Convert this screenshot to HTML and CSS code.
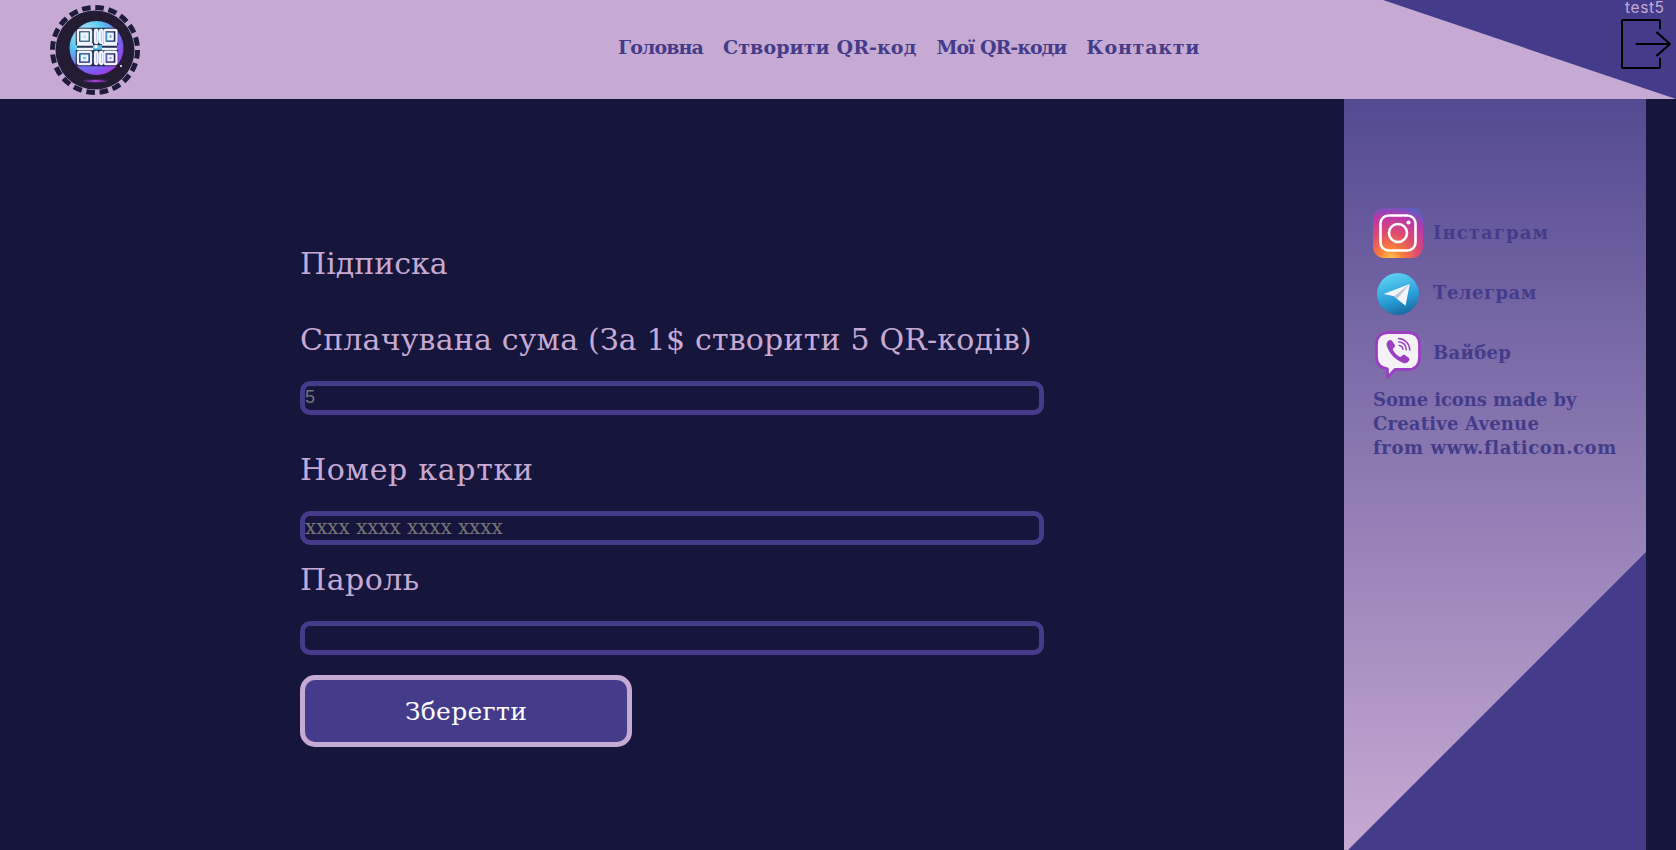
FILE: index.html
```html
<!DOCTYPE html>
<html lang="uk">
<head>
<meta charset="utf-8">
<title>Підписка</title>
<link rel="stylesheet" href="styles.css">
</head>
<body>
<header class="header">
  <a class="logo" href="#">
    <svg viewBox="0 0 90 90" width="90" height="90">
      <defs>
        <radialGradient id="lg" cx="0.3" cy="0.25" r="0.95">
          <stop offset="0" stop-color="#c8ecf8"/>
          <stop offset="0.35" stop-color="#54c8f0"/>
          <stop offset="0.7" stop-color="#7a5cf0"/>
          <stop offset="1" stop-color="#c020e0"/>
        </radialGradient>
        <linearGradient id="lb" x1="0" x2="1">
          <stop offset="0" stop-color="#2a2040"/>
          <stop offset="0.5" stop-color="#b040e8"/>
          <stop offset="1" stop-color="#2a2040"/>
        </linearGradient>
      </defs>
      <circle cx="45" cy="45" r="42.500" fill="none" stroke="#1f1b3a" stroke-width="5" stroke-dasharray="8.600 4.750"/>
      <circle cx="45" cy="45" r="39.500" fill="#231c33"/>
      <circle cx="46.500" cy="43" r="27" fill="url(#lg)"/>
      <g fill="none" stroke="#17122c" stroke-width="4.500" opacity="0.800">
        <path d="M28 25h13v13h-13zM45 25h7v13h-7zM54 25h12v13h-12zM28 47h13v12h-13zM45 47h7v12h-7zM54 47h12v12h-12zM27 41h16M52 41h15"/>
      </g>
      <g fill="none" stroke="#eef3fd" stroke-width="2.300">
        <rect x="28" y="25" width="13" height="13" rx="1"/>
        <rect x="32" y="29" width="5" height="5"/>
        <rect x="45" y="25" width="2.500" height="13" rx="1"/>
        <rect x="50" y="25" width="2.500" height="13" rx="1"/>
        <rect x="54.500" y="25" width="12" height="13" rx="1"/>
        <rect x="58.500" y="29" width="4" height="5"/>
        <rect x="28" y="47" width="13" height="12" rx="1"/>
        <rect x="32" y="51" width="5" height="4"/>
        <rect x="45" y="47" width="2.500" height="12" rx="1"/>
        <rect x="50" y="47" width="2.500" height="12" rx="1"/>
        <rect x="54.500" y="47" width="12" height="12" rx="1"/>
        <rect x="58.500" y="51" width="4" height="4"/>
        <path d="M27 39.500h16M52 39.500h15M27 44h16M52 44h15"/>
      </g>
      <rect x="44.500" y="40" width="3" height="3" fill="#eef3fd"/>
      <circle cx="71" cy="61" r="1" fill="#fff"/>
      <rect x="33" y="74.800" width="25" height="2.400" rx="1.200" fill="url(#lb)"/>
    </svg>
  </a>
  <nav class="nav">
    <a class="nav-link nav-home" href="#">Головна</a>
    <a class="nav-link nav-create" href="#">Створити QR-код</a>
    <a class="nav-link nav-mine" href="#">Мої QR-коди</a>
    <a class="nav-link nav-contacts" href="#">Контакти</a>
  </nav>
  <div class="user">
    <span class="user-name">test5</span>
    <svg class="logout" viewBox="0 0 50 50" width="50" height="50" fill="none" stroke="#000" stroke-width="2" stroke-linecap="round" stroke-linejoin="round">
      <path d="M39 9.500V2a1 1 0 0 0-1-1H2a1 1 0 0 0-1 1v46a1 1 0 0 0 1 1h36a1 1 0 0 0 1-1v-8.500"/>
      <path d="M15.500 25H49M36 13.500 49 25 36 36.500"/>
    </svg>
  </div>
</header>
<div class="page">
  <main class="content">
    <h1 class="title">Підписка</h1>
    <form class="form">
      <label class="label label-first" for="sum">Сплачувана сума (За 1$ створити 5 QR-кодів)</label>
      <input class="field field-num" id="sum" type="text" placeholder="5">
      <label class="label label-wide" for="card">Номер картки</label>
      <input class="field field-card" id="card" type="text" placeholder="xxxx xxxx xxxx xxxx">
      <label class="label label-tight" for="pass">Пароль</label>
      <input class="field" id="pass" type="password">
      <button class="save" type="button">Зберегти</button>
    </form>
  </main>
  <aside class="side">
    <ul class="social">
      <li class="social-row">
        <span class="social-icon icon-insta">
          <svg viewBox="0 0 50 50" width="50" height="50">
            <defs>
              <radialGradient id="ig" cx="0.35" cy="1.050" r="1.150">
                <stop offset="0" stop-color="#ffd34e"/>
                <stop offset="0.22" stop-color="#fb7d3a"/>
                <stop offset="0.5" stop-color="#dc4a72"/>
                <stop offset="0.78" stop-color="#bb36ab"/>
                <stop offset="1" stop-color="#4f62c8"/>
              </radialGradient>
            </defs>
            <rect width="50" height="50" rx="11" fill="url(#ig)"/>
            <rect x="7.500" y="7.500" width="35" height="35" rx="8" fill="none" stroke="#fff" stroke-width="2.600"/>
            <circle cx="25" cy="25" r="9" fill="none" stroke="#fff" stroke-width="2.600"/>
            <circle cx="35.500" cy="14.500" r="2.100" fill="#fff"/>
          </svg>
        </span>
        <a class="social-link link-insta" href="#">Інстаграм</a>
      </li>
      <li class="social-row">
        <span class="social-icon icon-tg">
          <svg viewBox="0 0 50 50" width="42" height="42">
            <defs>
              <linearGradient id="tg" x1="0.3" y1="0" x2="0.6" y2="1">
                <stop offset="0" stop-color="#5fd4f6"/>
                <stop offset="0.6" stop-color="#2a9fd8"/>
                <stop offset="1" stop-color="#17699f"/>
              </linearGradient>
            </defs>
            <circle cx="25" cy="25" r="25" fill="url(#tg)"/>
            <path d="M8 25 L39 13 L34 39 L24 31 L22 28z" fill="#f4f5f8"/>
            <path d="M20 28 L39 13 L24 31 L34 39 Z" fill="#bcc8d6"/>
          </svg>
        </span>
        <a class="social-link link-tg" href="#">Телеграм</a>
      </li>
      <li class="social-row">
        <span class="social-icon icon-viber">
          <svg viewBox="0 0 46 48" width="46" height="48">
            <path d="M13 1.500h20c7 0 11.500 4.500 11.500 11.500v14c0 7-4.500 11.500-11.500 11.500H20l-7.500 8v-8.500C5.500 37 1.500 33 1.500 26V13C1.500 6 6 1.500 13 1.500z" fill="#f4f2f6" stroke="#9a3fc0" stroke-width="2.800" stroke-linejoin="round"/>
            <path d="M13 10c2-1.500 3.500-1 4.500.5l2 3c.8 1.300.5 2.500-.8 3.500-1 .8-1 1.500-.4 2.600 1.500 2.800 3.500 4.800 6 6 1 .5 1.700.3 2.400-.6 1-1.300 2.300-1.500 3.500-.7l3.200 2.300c1.300 1 1.400 2.300.4 3.500-1.500 2-3.500 2.700-5.700 1.800-8-3.400-13.500-9-16.300-17-.7-2 .2-3.500 1.200-4.900z" fill="#9a3fc0"/>
            <path d="M23.500 7.500c6.500.3 11 5 11.300 11.500M23.800 11c4.500.3 7.300 3.300 7.500 7.700M24.200 14.500c2.300.2 3.500 1.500 3.700 3.800" fill="none" stroke="#9a3fc0" stroke-width="1.500" stroke-linecap="round"/>
          </svg>
        </span>
        <a class="social-link link-viber" href="#">Вайбер</a>
      </li>
    </ul>
    <p class="credit">
      <span class="credit-line credit-some">Some icons made by</span>
      <span class="credit-line">Creative Avenue</span>
      <span class="credit-line credit-from">from www.flaticon.com</span>
    </p>
  </aside>
</div>
</body>
</html>
```
FILE: styles.css
```css
* { box-sizing: border-box; }
html, body { height: 100%; }
body {
  margin: 0;
  background: #16153c;
  font-family: "DejaVu Serif", "Liberation Serif", serif;
  overflow: hidden;
}
.header {
  position: relative;
  display: flex;
  align-items: center;
  height: 99px;
  background: #c7aad3;
  padding-left: 50px;
}
.header::before {
  content: "";
  position: absolute;
  inset: 0;
  background: #443c8a;
  clip-path: polygon(1383px 0, 1676px 0, 1676px 99px);
}
.logo {
  position: relative;
  display: block;
  width: 90px;
  height: 90px;
}
.logo svg { display: block; }
.nav {
  position: relative;
  display: flex;
  gap: 20px;
  margin-left: 478px;
  padding-bottom: 5px;
}
.nav-link {
  color: #443c8a;
  font-size: 19px;
  font-weight: 700;
  text-decoration: none;
  white-space: nowrap;
}
.nav-home { letter-spacing: -0.900px; }
.nav-create { letter-spacing: 0.100px; }
.nav-mine { letter-spacing: -1px; }
.nav-contacts { letter-spacing: 0.800px; }
.user {
  position: absolute;
  top: 0;
  left: 1621px;
  width: 50px;
  height: 99px;
}
.user-name {
  display: block;
  margin-left: 4px;
  color: #c7aad3;
  font-family: Inter, "Liberation Sans", sans-serif;
  font-size: 15.500px;
  line-height: 16px;
  letter-spacing: 0.600px;
}
.logout {
  display: block;
  margin-top: 3px;
}
.page {
  display: flex;
  height: 751px;
}
.content {
  width: 1344px;
  padding: 150px 0 0 300px;
}
.title {
  margin: 0;
  color: #c7aad3;
  font-size: 30px;
  font-weight: 400;
  line-height: 30px;
}
.form {
  display: flex;
  flex-direction: column;
  align-items: flex-start;
}
.label {
  margin-top: 40px;
  margin-bottom: 26px;
  color: #c7aad3;
  font-size: 30px;
  line-height: 30px;
  letter-spacing: 0.200px;
}
.label-first { margin-top: 46px; }
.label-wide { letter-spacing: 0.700px; }
.label-tight {
  margin-top: 20px;
  letter-spacing: 0.500px;
}
.field {
  width: 744px;
  height: 34px;
  padding: 0 0 2px;
  border: 5px solid #443c8a;
  border-radius: 10px;
  background: #16153c;
  color: #fff;
  font-family: "Liberation Sans", sans-serif;
  font-size: 18px;
  outline: none;
}
.field::placeholder {
  color: #757575;
  opacity: 1;
}
.field-card {
  font-family: "DejaVu Serif", serif;
  font-size: 20px;
  letter-spacing: -0.100px;
}
.save {
  width: 332px;
  height: 72px;
  margin-top: 20px;
  border: 5px solid #c7aad3;
  border-radius: 15px;
  background: #443c8a;
  color: #fff;
  font-family: "DejaVu Serif", serif;
  font-size: 25px;
  letter-spacing: 0.300px;
}
.side {
  position: relative;
  width: 302px;
  padding: 103px 20px 0 29px;
  background: linear-gradient(#534a91, #c7aad3);
}
.side::after {
  content: "";
  position: absolute;
  inset: 0;
  background: #443c8a;
  clip-path: polygon(100% 453px, 100% 100%, 4px 100%);
}
.social {
  position: relative;
  z-index: 1;
  margin: 0;
  padding: 0;
  list-style: none;
}
.social-row {
  display: flex;
  align-items: center;
  height: 60px;
}
.social-icon {
  display: flex;
  justify-content: center;
  align-items: center;
  width: 50px;
  height: 50px;
  margin-right: 10px;
}
.icon-insta { margin-top: 2px; }
.icon-tg { margin-top: 4px; }
.icon-viber { margin-top: 6px; }
.social-icon svg { display: block; }
.social-link {
  color: #443c8a;
  font-size: 18px;
  font-weight: 700;
  text-decoration: none;
}
.link-insta { letter-spacing: 1.100px; }
.link-tg { letter-spacing: 0.500px; }
.link-viber { letter-spacing: 0.300px; }
.credit {
  position: relative;
  z-index: 1;
  margin: 6px 0 0;
  color: #443c8a;
  font-size: 18px;
  font-weight: 700;
  line-height: 24px;
}
.credit-line {
  display: block;
  letter-spacing: 0.200px;
  white-space: nowrap;
}
.credit-some { letter-spacing: -0.100px; }
.credit-from { letter-spacing: 0.600px; }
```
